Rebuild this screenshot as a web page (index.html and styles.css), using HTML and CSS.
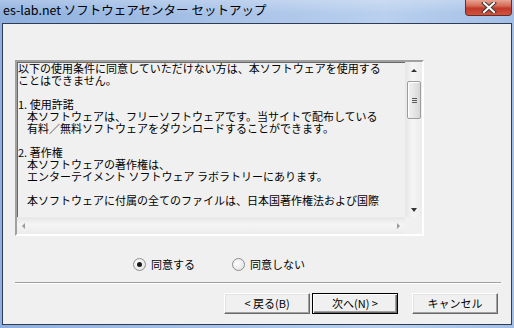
FILE: index.html
```html
<!DOCTYPE html>
<html lang="ja">
<head>
    <meta charset="UTF-8">
    <title>es-lab.net ソフトウェアセンター セットアップ</title>
    <link rel="stylesheet" href="styles.css">
</head>
<body>
    <div class="window">
        <!-- Title bar -->
        <div class="titlebar">
            <span class="title">es-lab.net ソフトウェアセンター セットアップ</span>
            <div class="close">
                <svg width="16" height="11" viewBox="0 0 16 11">
                    <path d="M3 1 L13 10 M13 1 L3 10" stroke="#3b3b3b" stroke-width="4" stroke-linecap="square"/>
                    <path d="M3 1 L13 10 M13 1 L3 10" stroke="#fff" stroke-width="2" stroke-linecap="square"/>
                </svg>
            </div>
        </div>

        <div class="client">
            <!-- License text -->
            <div class="textbox">
                <div class="text">
                    <p>以下の使用条件に同意していただけない方は、本ソフトウェアを使用する</p>
                    <p>ことはできません。</p>
                    <p>&nbsp;</p>
                    <p>1. 使用許諾</p>
                    <p class="ind">本ソフトウェアは、フリーソフトウェアです。当サイトで配布している</p>
                    <p class="ind">有料／無料ソフトウェアをダウンロードすることができます。</p>
                    <p>&nbsp;</p>
                    <p>2. 著作権</p>
                    <p class="ind">本ソフトウェアの著作権は、</p>
                    <p class="ind">エンターテイメント ソフトウェア ラボラトリーにあります。</p>
                    <p>&nbsp;</p>
                    <p class="ind">本ソフトウェアに付属の全てのファイルは、日本国著作権法および国際</p>
                </div>
                <div class="vscroll">
                    <div class="arrow up"></div>
                    <div class="track">
                        <div class="thumb"><span class="grip"></span></div>
                    </div>
                    <div class="arrow down"></div>
                </div>
                <div class="hscroll">
                    <div class="arrow left"></div>
                    <div class="arrow right"></div>
                </div>
                <div class="corner"></div>
            </div>

            <!-- Agree / disagree -->
            <div class="choices">
                <label class="radio"><span class="dot checked"></span>同意する</label>
                <label class="radio"><span class="dot"></span>同意しない</label>
            </div>

            <div class="separator"></div>

            <!-- Buttons -->
            <div class="buttons">
                <button class="btn">&lt; 戻る(B)</button>
                <button class="btn default">次へ(N) &gt;</button>
                <button class="btn cancel">キャンセル</button>
            </div>
        </div>
    </div>
</body>
</html>
```

FILE: styles.css
```css
body {
    margin: 0;
    width: 514px;
    height: 328px;
    overflow: hidden;
    font-family: "Noto Sans CJK JP", "Noto Sans", sans-serif;
    background: linear-gradient(90deg, #8fb0de 0%, #a9c3e8 45%, #b9d0ee 75%, #a3bfe6 100%);
}
.window {
    display: flex;
    flex-direction: column;
    height: 328px;
}
.titlebar {
    height: 23px;
    display: flex;
    justify-content: space-between;
    align-items: flex-start;
    padding-left: 3px;
    background: linear-gradient(180deg, rgba(255,255,255,0.25), rgba(255,255,255,0) 60%);
}
.title {
    font-size: 12.5px;
    line-height: 20px;
    color: #000;
    white-space: nowrap;
}
.close {
    width: 45px;
    height: 15px;
    margin-right: 2px;
    border: 1px solid #6b2a22;
    border-top: none;
    border-radius: 0 0 4px 4px;
    background: linear-gradient(180deg, #e9a393 0%, #d46a55 40%, #c2392a 55%, #cd5440 100%);
    display: flex;
    justify-content: center;
    align-items: center;
}
.client {
    flex: 1;
    margin: 0 2px 3px 2px;
    border: 1px solid #2e3c55;
    background: #f0f0f0;
    padding: 36px 0 0 12px;
}
.textbox {
    width: 405px;
    height: 172px;
    border: 2px solid;
    border-color: #a0a0a0 #fff #fff #a0a0a0;
    box-shadow: inset 1px 1px #696969, inset -1px -1px #e3e3e3;
    display: grid;
    grid-template-columns: 1fr 17px;
    grid-template-rows: 1fr 17px;
    background: #f0f0f0;
}
.text {
    overflow: hidden;
    padding: 0 0 0 1px;
    font-size: 11px;
    line-height: 12px;
    color: #000;
    white-space: nowrap;
}
.text p {
    margin: 0;
}
.text .ind {
    padding-left: 9px;
}
.vscroll {
    display: flex;
    flex-direction: column;
    background: linear-gradient(90deg, #e7e7e7, #f5f5f5 40%, #ececec);
    border-left: 1px solid #e8e8e8;
}
.vscroll .track {
    flex: 1;
    padding: 0 1px;
}
.arrow {
    width: 17px;
    height: 17px;
    position: relative;
    flex-shrink: 0;
}
.arrow::after {
    content: "";
    position: absolute;
    width: 0;
    height: 0;
    left: 5px;
    top: 6px;
    border: 3px solid transparent;
}
.arrow.up::after {
    border-bottom: 3px solid #333;
    top: 4px;
}
.arrow.down::after {
    border-top: 4px solid #333;
    top: 8px;
}
.arrow.left::after {
    border-right: 3px solid #9a9a9a;
    left: 2px;
    top: 5px;
}
.arrow.right::after {
    border-left: 3px solid #9a9a9a;
    left: 9px;
    top: 5px;
}
.thumb {
    height: 36px;
    margin-top: 2px;
    border: 1px solid #9c9c9c;
    border-radius: 2px;
    background: linear-gradient(90deg, #f2f2f2, #e6e6e6 50%, #d6d6d6);
    box-shadow: inset 1px 1px #fff;
    display: flex;
    justify-content: center;
    align-items: center;
}
.grip {
    width: 5px;
    height: 5px;
    background: repeating-linear-gradient(180deg, #595959 0 1px, transparent 1px 2px);
}
.hscroll {
    display: flex;
    justify-content: space-between;
    background: linear-gradient(180deg, #e7e7e7, #f5f5f5 40%, #ececec);
    border-top: 1px solid #e8e8e8;
}
.corner {
    background: #f0f0f0;
}
.choices {
    display: flex;
    height: 16px;
    margin: 20px 0 0 118px;
}
.radio {
    display: flex;
    align-items: center;
    font-size: 11px;
    color: #000;
    width: 99px;
}
.dot {
    width: 11px;
    height: 11px;
    margin-right: 5px;
    border: 1px solid #8e8f8f;
    border-radius: 50%;
    background: radial-gradient(circle at 40% 40%, #fff, #dcdcdc);
    position: relative;
}
.dot.checked::after {
    content: "";
    position: absolute;
    width: 5px;
    height: 5px;
    left: 3px;
    top: 3px;
    border-radius: 50%;
    background: #1a1a1a;
}
.separator {
    height: 1px;
    margin: 10px 10px 0 0;
    background: #a0a0a0;
    border-bottom: 1px solid #fff;
}
.buttons {
    display: flex;
    justify-content: flex-end;
    gap: 2px;
    margin-top: 9px;
    padding-right: 13px;
}
.btn {
    width: 86px;
    height: 21px;
    padding: 0;
    font-family: "Noto Sans CJK JP", sans-serif;
    font-size: 11px;
    line-height: 15px;
    color: #000;
    background: #f0f0f0;
    border: 1px solid;
    border-color: #fff #696969 #696969 #fff;
    box-shadow: inset -1px -1px #a0a0a0, inset 1px 1px #e3e3e3;
}
.btn.default {
    border: 1px solid #000;
    box-shadow: inset 1px 1px #fff, inset -1px -1px #696969, inset -2px -2px #a0a0a0;
}
.btn.cancel {
    margin-left: 12px;
}
```
